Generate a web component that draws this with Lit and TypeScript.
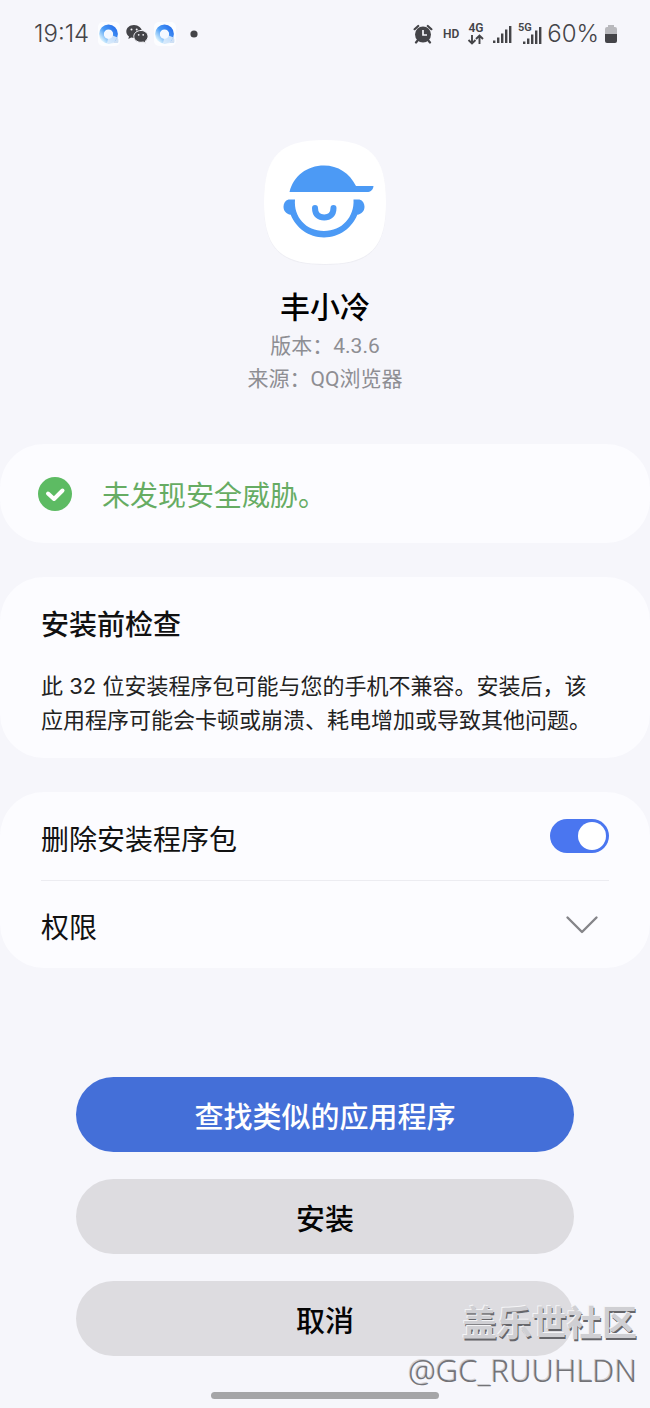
import { LitElement, html, css, svg } from "lit";
import { customElement, property, state } from "lit/decorators.js";

@customElement("status-bar")
class StatusBar extends LitElement {
  static styles = css`
    :host {
      display: flex;
      align-items: center;
      justify-content: space-between;
      height: 68px;
      padding: 0 32px 0 34px;
      box-sizing: border-box;
      color: #444448;
      font-family: Roboto, "Noto Sans CJK SC", sans-serif;
    }
    .group {
      display: flex;
      align-items: center;
    }
    .left {
      gap: 6px;
    }
    .right {
      gap: 5px;
    }
    .time,
    .percent {
      font-family: Inter, Roboto, sans-serif;
      font-size: 24px;
      line-height: 32px;
      font-weight: 300;
    }
    .time {
      margin-right: 3px;
    }
    svg {
      display: block;
    }
    .hd {
      font-size: 12px;
      font-weight: 600;
      margin: 0 3px 0 5px;
    }
    .net {
      font-weight: 600;
    }
  `;

  private browserIcon(id: string) {
    return html`<svg width="22" height="24" viewBox="0 0 22 24" aria-hidden="true">
      <defs>
        <linearGradient id=${id} x1="1" y1="0.2" x2="0.1" y2="1">
          <stop offset="0" stop-color="#2f78ee" />
          <stop offset=".5" stop-color="#4a9cf6" />
          <stop offset="1" stop-color="#d4effd" />
        </linearGradient>
      </defs>
      <rect width="22" height="24" rx="5" fill="#fcfdff" />
      <path d="M9 21 18.500 14c2 2 2.500 5 1.500 7z" fill="#cfe0f4" />
      <circle cx="10.500" cy="12" r="7" fill="none" stroke=${`url(#${id})`} stroke-width="4.800" />
      <path d="M11 12l8.500 3.500-4.500 6-6-.5z" fill="#e2effc" opacity=".85" />
      <circle cx="10.500" cy="12.500" r="4.300" fill="#f4f8ff" />
    </svg>`;
  }

  private bars(x: number) {
    return svg`<g fill="#444448">
      <rect x=${x} y="16.500" width="2.400" height="2.500" />
      <rect x=${x + 4} y="13.500" width="2.400" height="5.500" />
      <rect x=${x + 8} y="9.500" width="2.400" height="9.500" />
      <rect x=${x + 12} y="5.500" width="2.400" height="13.500" />
      <rect x=${x + 16} y="2" width="2.400" height="17" />
    </g>`;
  }

  render() {
    return html`
      <div class="group left">
        <span class="time">19:14</span>
        ${this.browserIcon("ring-a")}
        <svg width="22" height="20" viewBox="0 0 22 20" aria-hidden="true">
          <path
            fill="#444448"
            d="M8 1C3.600 1 .3 3.900.3 7.500c0 2 1 3.800 2.700 5L2.300 15l2.900-1.500c.9.300 1.800.4 2.800.4C12.400 13.900 16 11 16 7.500S12.400 1 8 1z"
          />
          <path
            fill="#444448"
            stroke="#f6f6fb"
            d="M15 6.500c-4 0-7.200 2.600-7.200 5.900s3.200 5.900 7.200 5.900c.8 0 1.600-.1 2.300-.3l2.600 1.400-.6-2.300c1.700-1.100 2.700-2.800 2.700-4.700 0-3.300-3.100-5.900-7-5.900z"
          />
          <g fill="#f6f6fb">
            <circle cx="5.500" cy="5.500" r="1" />
            <circle cx="10.700" cy="5.500" r="1" />
            <circle cx="12.700" cy="10.800" r=".9" />
            <circle cx="17.200" cy="10.800" r=".9" />
          </g>
        </svg>
        ${this.browserIcon("ring-b")}
        <svg width="22" height="8" viewBox="0 0 22 8" aria-hidden="true">
          <circle cx="12" cy="4" r="3.600" fill="#444448" />
        </svg>
      </div>
      <div class="group right">
        <svg width="20" height="20" viewBox="0 0 20 20" aria-hidden="true">
          <circle cx="10" cy="10.500" r="8" fill="#444448" />
          <path
            d="M1.600 5.200 5.200 2M18.400 5.200 14.800 2M5 16l-2 2.500M15 16l2 2.500"
            fill="none"
            stroke="#444448"
            stroke-width="2.200"
            stroke-linecap="round"
          />
          <path d="M10 6v5h4" fill="none" stroke="#f6f6fb" stroke-width="1.700" />
        </svg>
        <span class="hd">HD</span>
        <svg width="18" height="24" viewBox="0 0 18 24">
          <text class="net" x="9" y="10" font-size="12" text-anchor="middle" fill="#444448">4G</text>
          <path
            d="M5 13v8.500M1.500 18 5 21.500 8.500 18M12.500 22v-8.500M9 17l3.500-3.500L16 17"
            fill="none"
            stroke="#444448"
            stroke-width="1.900"
          />
        </svg>
        <svg width="22" height="20" viewBox="0 0 22 20" aria-hidden="true">${this.bars(3)}</svg>
        <svg width="25" height="24" viewBox="0 0 25 24">
          <text class="net" x="1" y="9" font-size="11" fill="#444448">5G</text>
          <g transform="translate(0 3)">${this.bars(6)}</g>
        </svg>
        <span class="percent">60%</span>
        <svg width="14" height="20" viewBox="0 0 14 20" aria-hidden="true">
          <path d="M4 3V1h6v2h1q2 0 2 2v5H1V5q0-2 2-2z" fill="#b9b9bd" />
          <path d="M1 10h12v7q0 2-2 2H3q-2 0-2-2z" fill="#444448" />
        </svg>
      </div>
    `;
  }
}

@customElement("pill-button")
class PillButton extends LitElement {
  @property() label = "";
  @property({ type: Boolean }) primary = false;

  static styles = css`
    :host {
      display: block;
    }
    button {
      display: block;
      width: 100%;
      height: 75px;
      padding: 0;
      border: 0;
      border-radius: 38px;
      background: #dddce0;
      color: #050505;
      font: 500 29px/40px "Noto Sans CJK SC", sans-serif;
      cursor: pointer;
    }
    .primary {
      background: #446fd8;
      color: #fff;
    }
  `;

  render() {
    return html`<button type="button" class=${this.primary ? "primary" : ""}>${this.label}</button>`;
  }
}

@customElement("app-root")
class AppRoot extends LitElement {
  @state() private removePackage = true;

  static styles = css`
    :host {
      display: block;
      position: relative;
      min-height: 100vh;
      background: #f6f6fb;
      color: #111;
      font-family: Roboto, "Noto Sans CJK SC", sans-serif;
    }
    svg {
      display: block;
    }
    h1,
    h2,
    p {
      margin: 0;
    }
    .app {
      display: flex;
      flex-direction: column;
      align-items: center;
      padding: 68px 24px 48px;
      text-align: center;
    }
    .app h1 {
      margin: 20px 0 2px;
      font-size: 30px;
      line-height: 40px;
      font-weight: 500;
      color: #000;
    }
    .app p {
      font-size: 21px;
      line-height: 33px;
      color: #8e8e93;
    }
    .cards {
      display: grid;
      gap: 34px;
    }
    .card {
      padding: 0 41px;
      border-radius: 44px;
      background: #fcfcff;
    }
    .safe {
      display: flex;
      align-items: center;
      gap: 30px;
      min-height: 99px;
      padding-left: 38px;
      font: 400 28px/40px "Noto Sans CJK SC", sans-serif;
      color: #66ac63;
    }
    .check {
      padding-top: 26px;
      padding-bottom: 21px;
    }
    .check h2 {
      margin-bottom: 26px;
      font: 500 28px/40px "Noto Sans CJK SC", sans-serif;
    }
    .check p {
      padding-right: 16px;
      font: 400 22px/34px Inter, "Noto Sans CJK SC", sans-serif;
      color: #222;
    }
    .row {
      display: flex;
      align-items: center;
      justify-content: space-between;
      width: 100%;
      height: 88px;
      padding: 0;
      border: 0;
      background: none;
      color: inherit;
      font: 400 28px/40px "Noto Sans CJK SC", sans-serif;
      text-align: left;
      cursor: pointer;
    }
    .row span {
      padding-top: 3px;
    }
    .row + .row {
      border-top: 1px solid #ececf1;
    }
    .row svg {
      margin-right: 10px;
    }
    .switch {
      appearance: none;
      display: flex;
      align-items: center;
      width: 59px;
      height: 34px;
      margin: 0;
      padding: 3px;
      box-sizing: border-box;
      border-radius: 17px;
      background: #b8b8be;
      cursor: pointer;
    }
    .switch::before {
      content: "";
      width: 28px;
      height: 28px;
      border-radius: 50%;
      background: #fff;
    }
    .switch:checked {
      justify-content: flex-end;
      background: #4a76f0;
    }
    .actions {
      display: grid;
      gap: 27px;
      padding: 109px 76px 36px;
    }
    .home {
      width: 35%;
      height: 7px;
      margin: 0 auto;
      border-radius: 4px;
      background: #a5a5a7;
    }
    .bottom {
      padding-bottom: 9px;
    }
    .mark {
      position: absolute;
      right: 13px;
      bottom: 16px;
      text-align: right;
      pointer-events: none;
      color: #cfcfd3;
      text-shadow: -1px -1px 0 #f4f4f6, 1px 2px 0 #66666a;
    }
    .mark-name {
      font-size: 35px;
      line-height: 46px;
      font-weight: 700;
    }
    .mark-user {
      font-family: "Noto Sans", "Noto Sans CJK SC", sans-serif;
      font-size: 31px;
      line-height: 44px;
      font-weight: 300;
      color: #737377;
      text-shadow: -1px -1px 0 #d0d0d4;
    }
  `;

  private toggle(e: Event) {
    this.removePackage = (e.target as HTMLInputElement).checked;
  }

  render() {
    return html`
      <status-bar></status-bar>
      <header class="app">
        <svg width="130" height="132" viewBox="0 0 130 132" aria-hidden="true">
          <path
            d="M65 5C20 5 4 21 4 67s16 62 61 62 61-16 61-62S110 5 65 5z"
            fill="#e9e9ef"
            opacity=".7"
          />
          <path d="M65 4C20 4 4 20 4 66s16 62 61 62 61-16 61-62S110 4 65 4z" fill="#fff" />
          <g fill="#4c9af5">
            <path
              d="M29.500 56C33.500 40 47 29.500 64 29.500c14 0 25.500 7.500 32 20.500h17.500c-.5 4-3 6-6.500 6z"
            />
            <path
              d="M35 63.500h-6.500c-3.300 1-5 4-5 7.300 0 4.200 2.900 7.400 7.200 8C36 92 48.500 101.500 64 101.500s28-9.500 33.300-22.700c4.300-.6 7.200-3.800 7.200-8 0-3.300-1.700-6.300-5-7.300H93.500C94.500 81 82 95 64 95S33.500 81 35 63.500z"
            />
          </g>
          <path
            d="M55 72c0 7 4 9.500 9.200 9.500S73.500 79 73.500 72"
            fill="none"
            stroke="#4c9af5"
            stroke-width="6"
            stroke-linecap="round"
          />
        </svg>
        <h1>丰小冷</h1>
        <p>版本：4.3.6</p>
        <p>来源：QQ浏览器</p>
      </header>
      <main>
        <div class="cards">
          <section class="card safe">
            <svg width="34" height="34" viewBox="0 0 34 34" aria-hidden="true">
              <circle cx="17" cy="17" r="17" fill="#5dbb63" />
              <path
                d="M10 16.500l6 5.500 8.500-8.500"
                fill="none"
                stroke="#fff"
                stroke-width="4"
                stroke-linecap="round"
                stroke-linejoin="round"
              />
            </svg>
            <span>未发现安全威胁。</span>
          </section>
          <section class="card check">
            <h2>安装前检查</h2>
            <p>此 32 位安装程序包可能与您的手机不兼容。安装后，该应用程序可能会卡顿或崩溃、耗电增加或导致其他问题。</p>
          </section>
          <section class="card">
            <label class="row" for="remove">
              <span>删除安装程序包</span>
              <input
                id="remove"
                class="switch"
                type="checkbox"
                role="switch"
                .checked=${this.removePackage}
                @change=${this.toggle}
              />
            </label>
            <button class="row" type="button" aria-expanded="false">
              <span>权限</span>
              <svg width="34" height="20" viewBox="0 0 34 20" aria-hidden="true">
                <path
                  d="M2.500 2.500 17 17 31.500 2.500"
                  fill="none"
                  stroke="#858589"
                  stroke-width="2.400"
                  stroke-linecap="round"
                  stroke-linejoin="round"
                />
              </svg>
            </button>
          </section>
        </div>
        <div class="actions">
          <pill-button primary label="查找类似的应用程序"></pill-button>
          <pill-button label="安装"></pill-button>
          <pill-button label="取消"></pill-button>
        </div>
      </main>
      <div class="bottom"><div class="home"></div></div>
      <div class="mark">
        <div class="mark-name">盖乐世社区</div>
        <div class="mark-user">@GC_RUUHLDN</div>
      </div>
    `;
  }
}
